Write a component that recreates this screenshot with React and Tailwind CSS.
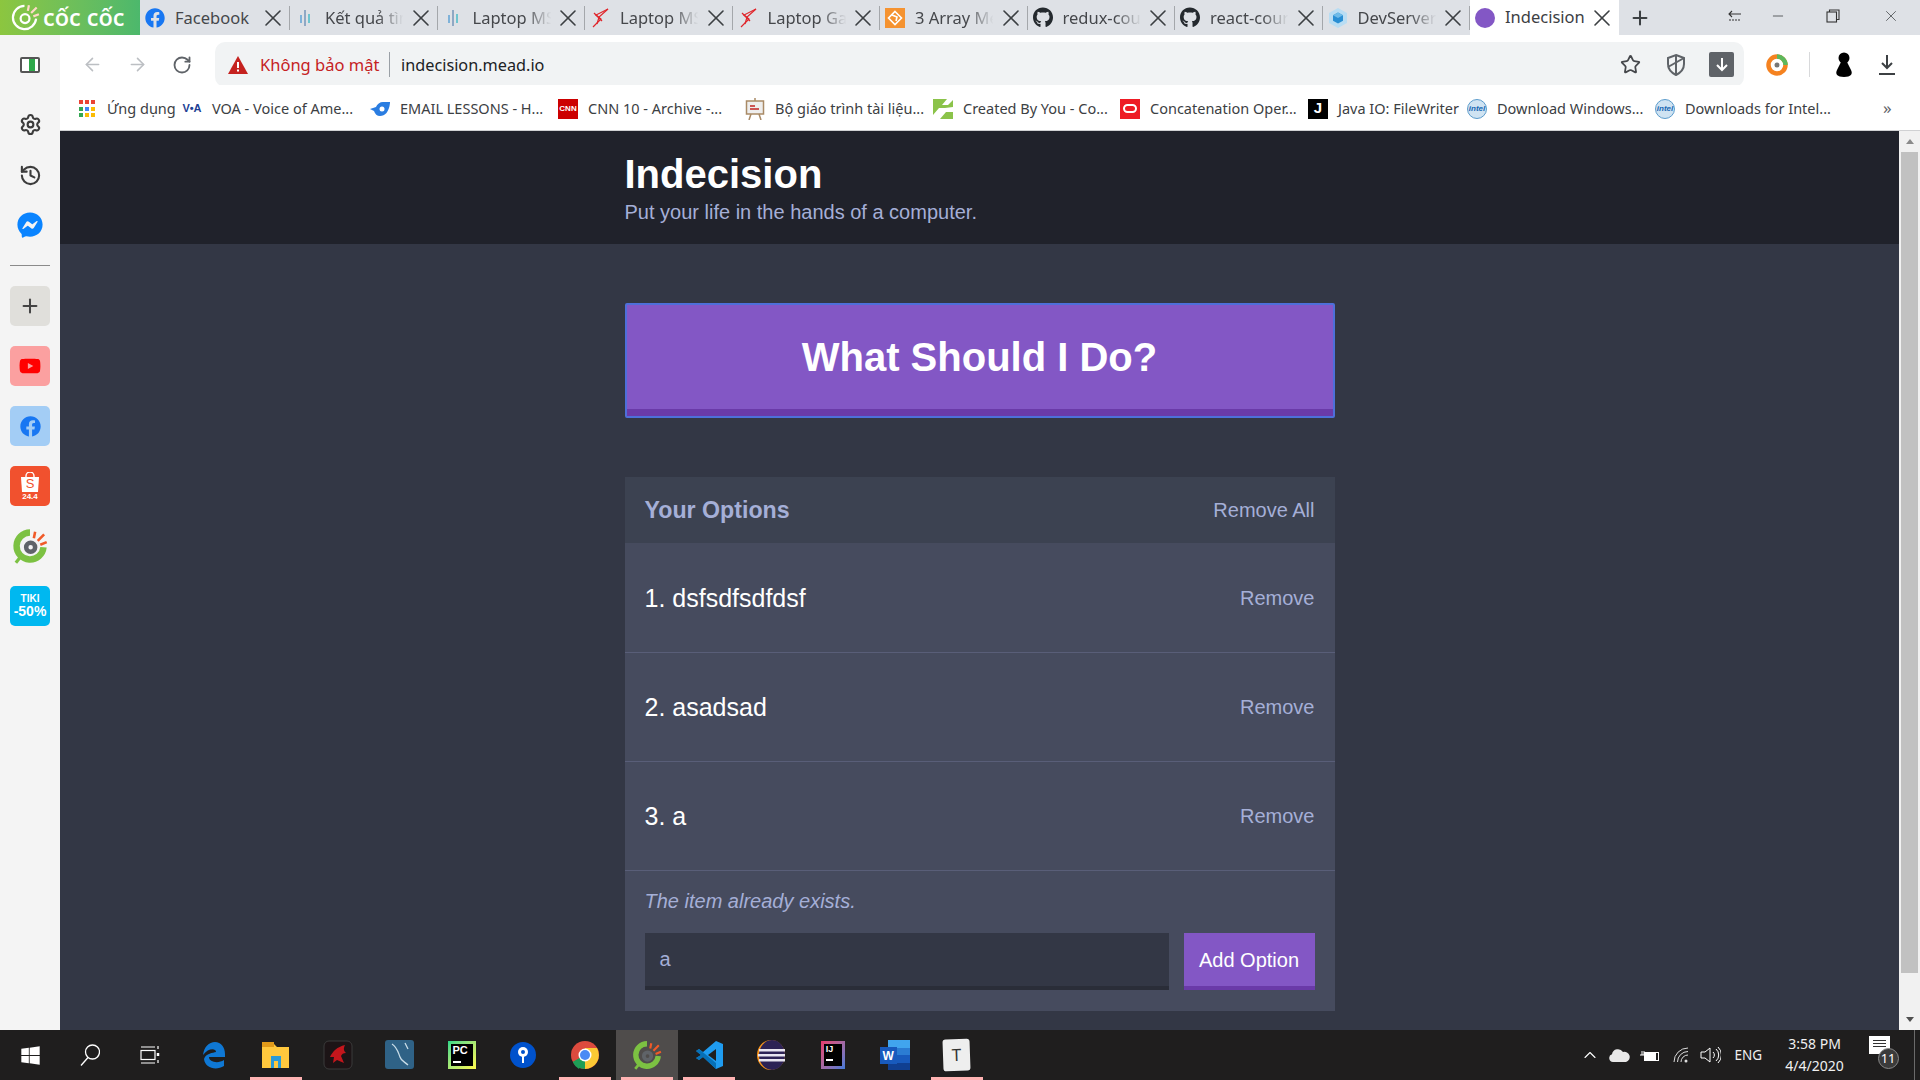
import { ArrowLeft, ArrowRight, RotateCw, Star, Plus, X, Minus, ChevronUp, History, Settings } from 'lucide-react'
import { FaFacebook, FaGithub, FaFacebookMessenger, FaYoutube, FaWindows } from 'react-icons/fa'

const ui = { fontFamily: '"Noto Sans", "Open Sans", sans-serif' }
const arial = { fontFamily: '"Liberation Sans", Arial, sans-serif' }

/* ---------- favicons ---------- */

function BarsIcon() {
  return (
    <svg width="20" height="20" viewBox="0 0 20 20">
      <rect x="5" y="7" width="2" height="8" fill="#7fb2d9" />
      <rect x="9" y="2" width="2" height="16" fill="#8fa8c4" />
      <rect x="13" y="6" width="2" height="9" fill="#6fc4cf" />
    </svg>
  )
}

function RedX() {
  return (
    <svg width="20" height="20" viewBox="0 0 20 20" fill="none" stroke="#e0252b" strokeWidth="1.2">
      <path d="M18 1 6 7l5 4-8 8" />
      <path d="M18 1 9 9l-2 7" />
      <path d="M4 5l8 8" />
    </svg>
  )
}

function OrangeIcon() {
  return (
    <div className="w-5 h-5 bg-[#f59331] flex items-center justify-center">
      <svg width="16" height="16" viewBox="0 0 16 16" fill="none" stroke="white" strokeWidth="1.6">
        <path d="M8 1.5 14.5 8 8 14.5 1.5 8Z" />
        <path d="M5 5l5 2-1 4" />
      </svg>
    </div>
  )
}

function Webpack() {
  return (
    <svg width="20" height="20" viewBox="0 0 20 20">
      <path d="M10 0l9 5v10l-9 5-9-5V5z" fill="#b9ddf3" />
      <path d="M10 4.5l5 2.8v5.4l-5 2.8-5-2.8V7.300z" fill="#2a8fd4" />
      <path d="M10 4.5l5 2.800-5 2.800-5-2.800z" fill="#6fbbe8" />
    </svg>
  )
}

function Tab({ icon, title, fade, className }) {
  return (
    <div className={`relative h-[35px] flex items-center pl-[5px] text-[#45474b] ${className}`}>
      <div className="w-5 h-5 shrink-0 flex items-center justify-center">{icon}</div>
      <div
        className={`ml-[10px] whitespace-nowrap text-[16.500px] leading-[35px] ${fade ? 'w-[80px] overflow-hidden [mask-image:linear-gradient(to_right,black_65%,transparent_98%)]' : ''}`}
      >
        {title}
      </div>
      <X size={28} strokeWidth={1.4} className="absolute right-[3px] top-[4px] text-[#3c4043]" />
      <div className="absolute right-0 top-[6px] h-[24px] w-px bg-[#a4a7ab]" />
    </div>
  )
}

function TabStrip() {
  return (
    <div className="h-[35px] bg-[#dee1e6] flex shrink-0" style={ui}>
      <div className="w-[140px] h-[35px] bg-gradient-to-r from-[#8cc63f] to-[#4cb86c] flex items-center pl-[9px] gap-[3px] text-white shrink-0">
        <CocCocMark size={31} mono />
        <span className="text-[23.500px] font-semibold leading-none whitespace-nowrap" style={{ fontFamily: '"Open Sans", sans-serif' }}>cốc cốc</span>
      </div>
      <Tab className="w-[150px]" icon={<FaFacebook size={20} color="#1877f2" />} title="Facebook" />
      <Tab className="w-[147.5px]" icon={<BarsIcon />} title="Kết quả tìm" fade />
      <Tab className="w-[147.5px]" icon={<BarsIcon />} title="Laptop MSI" fade />
      <Tab className="w-[147.5px]" icon={<RedX />} title="Laptop MSI" fade />
      <Tab className="w-[147.5px]" icon={<RedX />} title="Laptop Gaming" fade />
      <Tab className="w-[147.5px]" icon={<OrangeIcon />} title="3 Array Method" fade />
      <Tab className="w-[147.5px]" icon={<FaGithub size={21} color="#24292e" />} title="redux-course" fade />
      <Tab className="w-[147.5px]" icon={<FaGithub size={21} color="#24292e" />} title="react-course" fade />
      <Tab className="w-[147.5px]" icon={<Webpack />} title="DevServer" fade />
      <div className="relative w-[149px] h-[35px] bg-white flex items-center pl-[5px] text-[#3c4043]">
        <div className="w-5 h-5 rounded-full bg-[#8357c5]" />
        <div className="ml-[10px] text-[16.500px] whitespace-nowrap">Indecision</div>
        <X size={28} strokeWidth={1.4} className="absolute right-[3px] top-[4px]" />
      </div>
      <div className="w-[41px] flex items-center justify-center">
        <Plus size={22} strokeWidth={2.2} className="text-[#3c4043]" />
      </div>
      {/* window controls */}
      <div className="flex items-start pt-[9px] flex-1 text-[#3c4043]">
        <div className="ml-[68px] w-[14px]">
          <svg width="14" height="14" viewBox="0 0 14 14" fill="none" stroke="#333" strokeWidth="1.1">
            <path d="M1 5h12M4 2 1 5l3 3" />
            <path d="M1 11h12" strokeDasharray="2 1" />
          </svg>
        </div>
        <Minus size={16} strokeWidth={1.2} className="ml-[28px] mt-[-1px]" />
        <svg width="14" height="14" viewBox="0 0 14 14" fill="none" stroke="#333" strokeWidth="1.1" className="ml-[40px]">
          <rect x="1" y="3" width="9.500" height="10" />
          <path d="M3.500 3V1H13v9.500h-2.500" />
        </svg>
        <X size={18} strokeWidth={1} className="ml-[42px] mt-[-2px]" />
      </div>
    </div>
  )
}

function CocCocMark({ size, mono }) {
  return (
    <svg width={size} height={size} viewBox="0 0 28 28" fill="none">
      <path d="M14 3.500A10.500 10.500 0 1 0 24.500 15" stroke={mono ? 'white' : '#7cc142'} strokeWidth={mono ? 2 : 5} />
      <circle cx="14.500" cy="15" r={mono ? 4 : 3.500} stroke={mono ? 'white' : '#5f6368'} strokeWidth={mono ? 2 : 3.500} />
      <path d="M17 8l1-5M20 10l5-5M22 13l5-2" stroke={mono ? '#ffd9c7' : '#f05a28'} strokeWidth="2" />
      {!mono && <path d="M7 22l-4 5" stroke="#7cc142" strokeWidth="2.500" />}
    </svg>
  )
}

/* ---------- toolbar ---------- */

function Toolbar() {
  return (
    <div className="h-[50px] bg-white flex items-start pt-[7px] shrink-0" style={ui}>
      <div className="flex items-center h-[45px] w-[155px] shrink-0 pl-[22px] gap-[24px] text-[#bcbfc3]">
        <ArrowLeft size={21} strokeWidth={1.8} />
        <ArrowRight size={21} strokeWidth={1.8} />
        <RotateCw size={20} strokeWidth={2.2} className="text-[#5f6368]" />
      </div>
      <div className="w-[1529px] h-[45px] bg-[#f1f3f4] rounded-[10px] flex items-center pl-[13px] shrink-0">
        <svg width="20" height="18" viewBox="0 0 20 18">
          <path d="M10 0 20 18H0Z" fill="#c5221f" />
          <rect x="9" y="6" width="2" height="6" fill="white" />
          <rect x="9" y="13.500" width="2" height="2" fill="white" />
        </svg>
        <span className="ml-[12px] pt-[2px] text-[16.500px] text-[#c5221f] w-[129px] whitespace-nowrap">Không bảo mật</span>
        <div className="w-px h-[25px] bg-[#9aa0a6]" />
        <span className="ml-[11px] pt-[2px] text-[16.250px] text-[#202124] whitespace-nowrap">indecision.mead.io</span>
        <div className="ml-auto flex items-center text-[#45474b] pr-[10px]">
          <Star size={21} strokeWidth={2} />
          <svg width="20" height="24" viewBox="0 0 20 24" fill="none" stroke="#5f6368" strokeWidth="2" className="ml-[25px]">
            <path d="M10 2 18 5v6c0 6-4 9-8 11-4-2-8-5-8-11V5Z" />
            <path d="M10 22V2" />
            <path d="M2 14 18 5" />
          </svg>
          <div className="ml-[23px] w-[25px] h-[25px] bg-[#5f6368] rounded-[2px] flex items-center justify-center">
            <svg width="14" height="14" viewBox="0 0 14 14" fill="none" stroke="white" strokeWidth="2">
              <path d="M7 0v12M2 7l5 5 5-5" />
            </svg>
          </div>
        </div>
      </div>
      <div className="flex items-center h-[45px] flex-1">
        <svg width="22" height="22" viewBox="0 0 22 22" fill="none" strokeWidth="4.500" className="ml-[22px]">
          <circle cx="11" cy="11" r="8.500" stroke="#f58220" />
          <path d="M11 2.500A8.500 8.500 0 0 1 19.500 11" stroke="#5cb85c" />
          <circle cx="11" cy="11" r="2.500" fill="#777" stroke="none" />
        </svg>
        <div className="ml-[21px] w-px h-[25px] bg-[#d8d9db]" />
        <svg width="18" height="25" viewBox="0 0 18 25" className="ml-[25px]">
          <circle cx="9" cy="6" r="5.500" fill="black" />
          <path d="M6 10h6l4 8c2 4 0 7-7 7s-9-3-7-7Z" fill="black" />
        </svg>
        <svg width="16" height="20" viewBox="0 0 16 20" fill="none" stroke="#3c4043" strokeWidth="2" className="ml-[26px]">
          <path d="M8 0v13M3 8l5 5 5-5M0 19h16" />
        </svg>
      </div>
    </div>
  )
}

/* ---------- bookmarks ---------- */

function AppsIcon() {
  const cols = ['#ea4335', '#ea4335', '#ea4335', '#34a853', '#4285f4', '#fbbc05', '#34a853', '#fbbc05', '#fbbc05']
  return (
    <div className="grid grid-cols-3 gap-[2.500px] w-[16px]">
      {cols.map((c, i) => <div key={i} className="h-[4px]" style={{ background: c }} />)}
    </div>
  )
}

function IntelIcon() {
  return (
    <div className="w-5 h-5 rounded-full bg-[#cfe3f2] border border-[#5c9ccc] flex items-center justify-center">
      <span className="text-[8px] font-bold text-[#1667b2] italic" style={arial}>intel</span>
    </div>
  )
}

function Bookmark({ w, icon, children }) {
  return (
    <div className={`flex items-center h-[45px] pt-[2px] shrink-0 ${w}`}>
      <div className="w-5 h-5 flex items-center justify-center shrink-0">{icon}</div>
      <span className="ml-[10px] pt-[1px] text-[14.500px] text-[#3c4043] whitespace-nowrap">{children}</span>
    </div>
  )
}

function Bookmarks() {
  return (
    <div className="h-[46px] bg-white border-b border-[#d0d1d3] flex pl-[17px] shrink-0" style={ui}>
      <Bookmark w="w-[105px]" icon={<AppsIcon />}>Ứng dụng</Bookmark>
      <Bookmark w="w-[188px]" icon={<span className="text-[11px] font-black text-[#1c3f94] whitespace-nowrap" style={arial}>V•A</span>}>VOA - Voice of Ame...</Bookmark>
      <Bookmark w="w-[188px]" icon={
        <svg width="20" height="14" viewBox="0 0 20 14"><path d="M0 7 6 5c1-3 4-5 7-5h7v1c-1 9-5 13-10 13-3 0-5-2-6-5Z" fill="#2a7de1" /><circle cx="12" cy="7" r="2.500" fill="white" /></svg>
      }>EMAIL LESSONS - H...</Bookmark>
      <Bookmark w="w-[187px]" icon={
        <div className="w-5 h-5 bg-[#cc0000] text-white text-[8px] font-bold flex items-center justify-center" style={arial}>CNN</div>
      }>CNN 10 - Archive -...</Bookmark>
      <Bookmark w="w-[188px]" icon={
        <svg width="20" height="22" viewBox="0 0 20 22" fill="none"><rect x="1.500" y="3" width="17" height="13" fill="#eee" stroke="#a98a66" strokeWidth="1.500" /><path d="M5 8h5M5 11h9" stroke="#c55" strokeWidth="2" /><path d="M10 0v3M6 16l-2 6M14 16l2 6" stroke="#a98a66" strokeWidth="1.500" /></svg>
      }>Bộ giáo trình tài liệu...</Bookmark>
      <Bookmark w="w-[187px]" icon={
        <svg width="20" height="20" viewBox="0 0 20 20"><path d="M0 0h14L9 6h6l5-5v7L12 9H6L0 16Z" fill="#8bc34a" /><path d="M20 20H7l6-7h7Z" fill="#8bc34a" /></svg>
      }>Created By You - Co...</Bookmark>
      <Bookmark w="w-[188px]" icon={
        <div className="w-5 h-5 bg-[#ee1c25] flex items-center justify-center"><div className="w-[14px] h-[9px] rounded-full border-2 border-white" /></div>
      }>Concatenation Oper...</Bookmark>
      <Bookmark w="w-[159px]" icon={
        <div className="w-5 h-5 bg-black text-white text-[15px] font-bold flex items-center justify-center" style={arial}>J</div>
      }>Java IO: FileWriter</Bookmark>
      <Bookmark w="w-[188px]" icon={<IntelIcon />}>Download Windows...</Bookmark>
      <Bookmark w="w-[228px]" icon={<IntelIcon />}>Downloads for Intel...</Bookmark>
      <span className="leading-[46px] text-[17px] text-[#5f6368]">»</span>
    </div>
  )
}

/* ---------- left rail ---------- */

function RailTile({ className, children }) {
  return (
    <div className={`w-10 h-10 rounded-[5px] flex items-center justify-center mb-[20px] ${className}`}>{children}</div>
  )
}

function Sidebar() {
  return (
    <div className="w-[60px] bg-[#f4f4f4] flex flex-col items-center shrink-0">
      <div className="h-[60px] flex items-center">
        <div className="w-[20px] h-[16px] border-[2.500px] border-[#555] rounded-[2px] flex justify-end bg-white pr-[3px]">
          <div className="w-[6px] bg-[#2ea84a]" />
        </div>
      </div>
      <Settings size={23} strokeWidth={2.2} className="text-[#3c3c3c] mt-[18px]" />
      <History size={23} strokeWidth={2.2} className="text-[#3c3c3c] mt-[28px]" />
      <FaFacebookMessenger size={26} color="#0a84ff" className="mt-[25px]" />
      <div className="w-10 h-px bg-[#8a8a8a] mt-[27px] mb-[20px]" />
      <RailTile className="bg-[#e0dfdb]"><Plus size={22} strokeWidth={2.2} className="text-[#444]" /></RailTile>
      <RailTile className="bg-[#fba0a0]"><FaYoutube size={22} color="#f00" /></RailTile>
      <RailTile className="bg-[#a3cdf5]"><FaFacebook size={21} color="#1877f2" /></RailTile>
      <RailTile className="bg-[#f1512e] flex-col">
        <div className="relative w-[20px] h-[20px] mt-[1px]">
          <svg width="20" height="20" viewBox="0 0 20 20"><path d="M1 5h18l-1 15H2Z" fill="white" /><path d="M6 6V4a4 4 0 0 1 8 0v2" fill="none" stroke="white" strokeWidth="1.400" /></svg>
          <span className="absolute inset-0 pt-[5px] text-center text-[13px] leading-[14px] text-[#f1512e]" style={arial}>S</span>
        </div>
        <span className="text-[8px] leading-[9px] text-white font-bold" style={arial}>24.4</span>
      </RailTile>
      <RailTile className=""><CocCocMark size={36} /></RailTile>
      <div className="w-10 h-10 rounded-[5px] bg-[#00b8f0] flex flex-col items-center justify-center text-white font-bold" style={arial}>
        <span className="text-[10px] leading-[11px]">TIKI</span>
        <span className="text-[14px] leading-[15px]">-50%</span>
      </div>
    </div>
  )
}

/* ---------- the page in the browser ---------- */

function OptionRow({ label, h }) {
  return (
    <div className={`${h} bg-[#464b5e] border-b border-[#595e78] flex items-center justify-between px-5`}>
      <span className="text-[25px] text-white translate-y-[1px]">{label}</span>
      <span className="text-[20px] text-[#a5afd7]">Remove</span>
    </div>
  )
}

function IndecisionPage() {
  return (
    <div className="flex-1 bg-[#333745] overflow-hidden" style={arial}>
      <div className="h-[113px] bg-[#20222b]">
        <div className="w-[710px] mx-auto pt-[20px]">
          <h1 className="text-[40px] leading-[46px] font-bold text-white">Indecision</h1>
          <p className="text-[20px] leading-[23px] text-[#a5afd7] mt-[4px]">Put your life in the hands of a computer.</p>
        </div>
      </div>
      <div className="w-[710px] mx-auto">
        <button className="mt-[59px] w-full h-[115px] bg-[#8357c5] border-2 border-[#4e6fd9] rounded-[2px] flex flex-col">
          <span className="flex-1 flex items-center justify-center text-[40px] font-bold text-white">What Should I Do?</span>
          <span className="h-[7px] w-full bg-[#6a3aa8]" />
        </button>
        <div className="mt-[59px]">
          <div className="h-[66px] bg-[#3c4251] flex items-center justify-between px-5">
            <h3 className="text-[23.200px] font-bold text-[#a5afd7]">Your Options</h3>
            <span className="text-[20px] text-[#a5afd7]">Remove All</span>
          </div>
          <OptionRow label="1. dsfsdfsdfdsf" h="h-[110px]" />
          <OptionRow label="2. asadsad" h="h-[109px]" />
          <OptionRow label="3. a" h="h-[109px]" />
          <div className="bg-[#464b5e] h-[140px] px-5 pt-[18px]">
            <p className="text-[20px] leading-[24px] italic text-[#a5afd7]">The item already exists.</p>
            <div className="flex gap-[15px] mt-[20px]">
              <div className="flex-1 h-[57px] bg-[#333745] border-b-4 border-[#2a2d38] px-[15px] text-[20px] leading-[52px] text-[#a5afd7]">a</div>
              <button className="w-[131px] h-[57px] bg-[#8357c5] border-b-4 border-[#6a3aa8] text-[20px] text-white">Add Option</button>
            </div>
          </div>
        </div>
      </div>
    </div>
  )
}

function Scrollbar() {
  return (
    <div className="w-[21px] bg-[#f1f1f1] flex flex-col items-center shrink-0">
      <div className="h-[21px] w-full flex items-center justify-center">
        <div className="w-0 h-0 border-x-[4.500px] border-x-transparent border-b-[5px] border-b-[#8a8a8a]" />
      </div>
      <div className="w-[17px] h-[821px] bg-[#c1c1c1]" />
      <div className="flex-1" />
      <div className="h-[21px] w-full flex items-center justify-center">
        <div className="w-0 h-0 border-x-[4.500px] border-x-transparent border-t-[5px] border-t-[#505050]" />
      </div>
    </div>
  )
}

/* ---------- windows taskbar ---------- */

function TaskIcon({ running, active, children }) {
  return (
    <div className={`relative w-[61.900px] h-[50px] flex items-center justify-center shrink-0 ${active ? 'bg-[#4f4c4b]' : ''}`}>
      {children}
      {running && <div className="absolute bottom-0 left-[5px] right-[5px] h-[3px] bg-[#ffb3b3]" />}
    </div>
  )
}

function Taskbar() {
  return (
    <div className="relative h-[50px] bg-[#1f1e1e] flex items-center shrink-0 text-white" style={ui}>
      <div className="w-[60px] flex justify-center"><FaWindows size={21} color="white" /></div>
      <div className="w-[60px] flex justify-center">
        <svg width="20" height="22" viewBox="0 0 20 22" fill="none" stroke="white" strokeWidth="1.300"><circle cx="12.500" cy="8" r="7" /><path d="M8 13.500 1 21.500" /></svg>
      </div>
      <div className="w-[60px] flex justify-center">
        <svg width="20" height="20" viewBox="0 0 20 20" fill="none" stroke="white" strokeWidth="1.200"><rect x="1" y="5.500" width="14" height="9" /><path d="M1 2h14M1 18h14" /><path d="M18 8v3" strokeWidth="2.500" /><path d="M18 1v3M18 15v3" /></svg>
      </div>
      <div className="w-[3px]" />
      <TaskIcon>
        <svg width="24" height="27" viewBox="0 0 24 27"><path d="M1 13C2 5 7 0 13 0c6 0 10 5 10 12v3H7c0 5 9 7 15 3v6c-8 5-19 2-20-7 2-6 9-6 12-7 0-4-8-4-13 3Z" fill="#0f78d4" /></svg>
      </TaskIcon>
      <TaskIcon running>
        <svg width="28" height="26" viewBox="0 0 28 26"><path d="M0 2h12l3 3h12v21H0Z" fill="#ffc83d" /><rect x="0" y="0" width="12" height="5" fill="#e09a1a" /><path d="M9 14h10v12h-3v-7h-4v7H9Z" fill="#2a9ad6" /></svg>
      </TaskIcon>
      <TaskIcon>
        <svg width="30" height="30" viewBox="0 0 30 30" fill="none"><rect x="1" y="1" width="28" height="28" rx="5" fill="#1c1416" stroke="#3a3a3a" /><path d="M7 17c3-6 7-10 15-12-2 4-1 6 1 8-3 0-4 1-5 3l3 7-7-3-4 3 1-6Z" fill="#c4161c" /></svg>
      </TaskIcon>
      <TaskIcon>
        <svg width="30" height="30" viewBox="0 0 30 30" fill="none"><rect width="29" height="29" rx="3" fill="#2f6286" /><path d="M7 4c5 3 6 8 8 13 1 4 5 5 8 8M20 3l3 6" stroke="#c9dde8" strokeWidth="1.300" /></svg>
      </TaskIcon>
      <TaskIcon>
        <div className="relative w-[28px] h-[28px] bg-gradient-to-br from-[#21d789] to-[#fcf84a] p-[3px]">
          <div className="w-full h-full bg-black text-white text-[11px] font-bold leading-[12px] pl-[2px]" style={arial}>PC
            <div className="w-[8px] h-[2px] bg-white mt-[5px]" />
          </div>
        </div>
      </TaskIcon>
      <TaskIcon>
        <svg width="26" height="26" viewBox="0 0 26 26"><circle cx="13" cy="13" r="13" fill="#0052cc" /><circle cx="13" cy="10" r="5" fill="white" /><circle cx="13" cy="10" r="2" fill="#0052cc" /><path d="M12 13h2v8h-2z" fill="white" /></svg>
      </TaskIcon>
      <TaskIcon running>
        <svg width="28" height="28" viewBox="0 0 28 28">
          <circle cx="14" cy="14" r="14" fill="#dd4b3e" />
          <path d="M14 14 1.900 21A14 14 0 0 0 14 28Z" fill="#1e9e56" />
          <path d="M14 28A14 14 0 0 0 26 7h-12Z" fill="#fcc934" />
          <path d="M14 14 8 28A14 14 0 0 1 1.900 21Z" fill="#1e9e56" />
          <circle cx="14" cy="14" r="6.500" fill="white" />
          <circle cx="14" cy="14" r="5" fill="#4a8af4" />
        </svg>
      </TaskIcon>
      <TaskIcon running active>
        <div className="w-[30px] h-[30px] flex items-center justify-center"><CocCocMark size={30} /></div>
      </TaskIcon>
      <TaskIcon running>
        <svg width="27" height="28" viewBox="0 0 27 28"><path d="M20 0 27 3v22l-7 3L7 16l-4 3-3-2 5-3-5-4 3-2 4 3Z" fill="#1f9cf0" /><path d="M20 8 12 14l8 6Z" fill="#1f1e1e" /><path d="M0 10l3-2 17 14v6L7 16l-4 3-3-2 5-3Z" fill="#0065a9" opacity="0.800" /></svg>
      </TaskIcon>
      <TaskIcon>
        <svg width="28" height="30" viewBox="0 0 28 30"><ellipse cx="14" cy="15" rx="14" ry="15" fill="#f7941e" /><ellipse cx="15" cy="15" rx="13" ry="15" fill="#2c2255" /><rect x="2" y="9" width="26" height="2.500" fill="#e8e6f0" /><rect x="1" y="14" width="27" height="2.500" fill="#e8e6f0" /><rect x="2" y="19" width="26" height="2.500" fill="#e8e6f0" /></svg>
      </TaskIcon>
      <TaskIcon>
        <div className="w-[24px] h-[28px] bg-gradient-to-br from-[#e8356b] to-[#3c78d8] p-[3px]">
          <div className="w-full h-full bg-black text-white text-[9px] font-bold leading-[11px] pl-[2px]" style={arial}>IJ
            <div className="w-[7px] h-[2px] bg-white mt-[4px]" />
          </div>
        </div>
      </TaskIcon>
      <TaskIcon>
        <div className="relative w-[30px] h-[30px]">
          <div className="absolute right-0 top-0 w-[22px] h-[30px] flex flex-col">
            <div className="flex-1 bg-[#41a5ee]" /><div className="flex-1 bg-[#2b7cd3]" /><div className="flex-1 bg-[#185abd]" /><div className="flex-1 bg-[#103f91]" />
          </div>
          <div className="absolute left-0 top-[7px] w-[17px] h-[17px] bg-[#185abd] text-white text-[12px] font-bold flex items-center justify-center" style={arial}>W</div>
        </div>
      </TaskIcon>
      <TaskIcon running>
        <div className="w-[27px] h-[32px] bg-[#eeeeee] rounded-[3px] text-[#333] text-[17px] flex items-center justify-center -rotate-2" style={ui}>T</div>
      </TaskIcon>

      {/* tray */}
      <div className="ml-[592px] flex items-center">
        <ChevronUp size={20} strokeWidth={1.300} className="text-white" />
        <svg width="21" height="14" viewBox="0 0 21 14" className="ml-[9px]"><path d="M4 14a4 4 0 0 1-1-7.800A6 6 0 0 1 14 4a5 5 0 0 1 3 10Z" fill="#e8e8e8" /></svg>
        <svg width="20" height="13" viewBox="0 0 20 13" fill="none" stroke="white" className="ml-[10px]"><rect x="4.500" y="3.500" width="14" height="8" /><rect x="5.500" y="4.500" width="10" height="6" fill="white" /><path d="M0 6h5M2 2v4M4 2v4" /></svg>
        <svg width="16" height="16" viewBox="0 0 16 16" fill="none" stroke="#ddd" className="ml-[13px]"><path d="M1 15A14 14 0 0 1 15 1M4.500 15A10.500 10.500 0 0 1 15 4.500M8 15a7 7 0 0 1 7-7" /><circle cx="13" cy="14" r="1.500" fill="#ddd" stroke="none" /></svg>
        <svg width="21" height="18" viewBox="0 0 21 18" fill="none" stroke="white" className="ml-[11px]"><path d="M1 6h4l5-4v14l-5-4H1Z" /><path d="M13 6a4 4 0 0 1 0 6M16 3a8 8 0 0 1 0 12M18 1a11 11 0 0 1 0 16" /></svg>
        <span className="ml-[14px] text-[13.500px] w-[30px] text-[#f0f0f0]">ENG</span>
      </div>
      <div className="ml-[15px] w-[70px] text-center text-[14px] leading-[22px] text-[#f0f0f0] whitespace-nowrap">
        <div>3:58 PM</div>
        <div>4/4/2020</div>
      </div>
      <div className="relative ml-[19px] w-[21px] h-[18px] -mt-[20px]">
        <div className="absolute inset-0 bg-white flex flex-col gap-[2px] px-[4px] pt-[4px]">
          <div className="h-px bg-[#333]" /><div className="h-px bg-[#333]" /><div className="h-px bg-[#333]" />
        </div>
        <div className="absolute left-[9px] top-[12px] w-[21px] h-[21px] rounded-full bg-[#3b3b3b] border border-[#888] text-[13px] leading-[19px] text-center text-white">11</div>
      </div>
      <div className="absolute right-[5px] top-0 bottom-0 w-px bg-[#6a6a6a]" />
    </div>
  )
}

export default function App() {
  return (
    <div className="w-[1920px] h-[1080px] flex flex-col overflow-hidden bg-white">
      <TabStrip />
      <div className="flex-1 flex min-h-0">
        <Sidebar />
        <div className="flex-1 flex flex-col min-w-0">
          <Toolbar />
          <Bookmarks />
          <div className="flex-1 flex min-h-0">
            <IndecisionPage />
            <Scrollbar />
          </div>
        </div>
      </div>
      <Taskbar />
    </div>
  )
}
